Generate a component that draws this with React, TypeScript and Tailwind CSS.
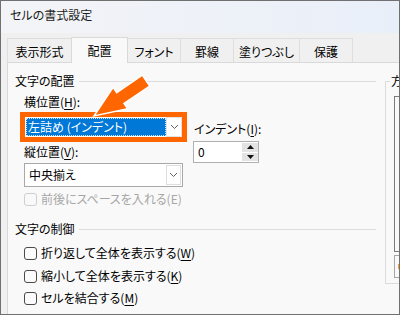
import React from "react";

const U = ({ c }: { c: string }) => <span className="underline underline-offset-[2px] decoration-1">{c}</span>;

const Chevron = () => (
  <svg width="9" height="6" viewBox="0 0 9 6" className="block">
    <path d="M1 1 L4.5 4.5 L8 1" fill="none" stroke="#606060" strokeWidth="1" />
  </svg>
);

const Check = ({ label, disabled }: { label: React.ReactNode; disabled?: boolean }) => (
  <div className={`flex items-center h-[16px] gap-[4px] ${disabled ? "text-[#a6a6a6]" : "text-black"}`}>
    <div className={`w-[13px] h-[13px] rounded-[3px] border ${disabled ? "border-[#cfcfcf] bg-[#f9f9f9]" : "border-[#4a4a4a] bg-[#fbfbfb]"}`} />
    <span className="leading-[16px] whitespace-nowrap">{label}</span>
  </div>
);

const Header = ({ text }: { text: string }) => (
  <div className="flex items-center h-[16px]">
    <span className="leading-[16px] whitespace-nowrap">{text}</span>
    <div className="flex-1 h-px bg-[#dcdcdc] ml-[4px]" />
  </div>
);

const tabs = [
  { t: "表示形式", w: "w-[65px]" },
  { t: "配置", w: "w-[57px]", sel: true },
  { t: "フォント", w: "w-[54px]" },
  { t: "罫線", w: "w-[54px]" },
  { t: "塗りつぶし", w: "w-[67px]" },
  { t: "保護", w: "w-[54px]" },
];

export default function App() {
  return (
    <div className="relative w-[400px] h-[315px] overflow-hidden border border-[#707070] bg-[#f0f0f0] flex flex-col text-[12px] text-black font-['Noto_Sans_CJK_JP','Noto_Sans',sans-serif] [font-feature-settings:'palt']">
      {/* title bar */}
      <div className="h-[32px] shrink-0 pl-[9px] pt-[6px] bg-linear-to-r from-[#f3f4f7] to-[#e9eff9] text-[#1b1b1b] leading-[16px]">
        セルの書式設定
      </div>
      {/* tab strip */}
      <div className="h-[29px] shrink-0 flex items-end pl-[6px] relative z-10">
        {tabs.map((tab, i) =>
          tab.sel ? (
            <div
              key={tab.t}
              className={`${tab.w} h-[26px] -mb-px ${i ? "-ml-px" : ""} relative z-10 flex items-center justify-center border-l border-r border-t border-[#d9d9d9] bg-[#f9f9f9] leading-[16px]`}
            >
              {tab.t}
            </div>
          ) : (
            <div
              key={tab.t}
              className={`${tab.w} h-[24px] ${i ? "-ml-px" : ""} flex items-center justify-center pt-[2px] border-l border-r border-t border-[#dedede] bg-[#f0f0f0] leading-[16px]`}
            >
              {tab.t}
            </div>
          )
        )}
      </div>
      {/* panel */}
      <div className="flex-1 ml-[6px] border-l border-t border-[#d9d9d9] bg-[#f9f9f9] flex">
        {/* left column */}
        <div className="w-[368px] shrink-0 pl-[7px] pt-[10px]">
          <Header text="文字の配置" />
          <div className="flex pl-[9px] mt-[5px]">
            <div className="w-[159px] shrink-0 flex flex-col">
              <div className="h-[16px] leading-[16px]">
                横位置(<U c="H" />):
              </div>
              {/* highlighted combo */}
              <div className="mt-[2px] -ml-[4px] w-[167px] h-[30px] border-[5px] border-[#ff6600] bg-white flex p-px">
                <div className="flex-1 bg-[#0078d7] border border-dotted border-[#cfe4f7] text-white flex items-center pl-[1px] leading-[16px] whitespace-nowrap">
                  左詰め (インデント)
                </div>
                <div className="w-[16px] -my-px -mr-px flex items-center justify-center border border-[#e3e3e3] bg-white">
                  <Chevron />
                </div>
              </div>
              <div className="mt-[2px] h-[16px] leading-[16px]">
                縦位置(<U c="V" />):
              </div>
              <div className="mt-[3px] h-[24px] border border-[#a8a8a8] bg-white flex p-px">
                <div className="flex-1 flex items-center pl-[3px] leading-[16px]">中央揃え</div>
                <div className="w-[15px] flex items-center justify-center border border-[#dedede]">
                  <Chevron />
                </div>
              </div>
              <div className="mt-[4px]">
                <Check disabled label="前後にスペースを入れる(E)" />
              </div>
            </div>
            <div className="ml-[10px] pt-[27px] flex flex-col">
              <div className="h-[16px] leading-[16px] ml-px whitespace-nowrap">
                インデント(<U c="I" />):
              </div>
              <div className="mt-[4px] w-[66px] h-[22px] border border-[#b0b0b0] bg-white flex">
                <div className="flex-1 flex items-center pl-[4px] leading-[16px]">0</div>
                <div className="w-[16px] flex flex-col gap-px py-px">
                  <div className="flex-1 bg-[#e3e3e3] flex items-center justify-center">
                    <svg width="7" height="4" viewBox="0 0 7 4" className="block">
                      <path d="M0 4 L3.5 0 L7 4 Z" fill="#111" />
                    </svg>
                  </div>
                  <div className="flex-1 bg-[#e3e3e3] flex items-center justify-center">
                    <svg width="7" height="4" viewBox="0 0 7 4" className="block">
                      <path d="M0 0 L7 0 L3.5 4 Z" fill="#111" />
                    </svg>
                  </div>
                </div>
              </div>
            </div>
          </div>
          <div className="mt-[14px]">
            <Header text="文字の制御" />
          </div>
          <div className="pl-[9px] flex flex-col">
            <div className="mt-[8px]">
              <Check label={<>折り返して全体を表示する(<U c="W" />)</>} />
            </div>
            <div className="mt-[7px]">
              <Check label={<>縮小して全体を表示する(<U c="K" />)</>} />
            </div>
            <div className="mt-[6px]">
              <Check label={<>セルを結合する(<U c="M" />)</>} />
            </div>
          </div>
        </div>
        {/* right group box */}
        <div className="relative ml-[9px] mt-[18px] w-[60px] h-[203px] shrink-0 border border-[#dcdcdc]">
          <div className="absolute left-[4px] -top-[9px] px-px bg-[#f9f9f9] leading-[16px] whitespace-nowrap">方向</div>
          <div className="ml-[8px] mt-[14px] h-[156px] border border-[#7a7a7a] bg-[#f9f9f9]" />
          <div className="ml-[8px] mt-[3px] h-[23px] border border-[#a6a6a6] bg-[#f9f9f9] flex items-center pl-[3px]">
            <div className="w-[2px] h-[5px] bg-[#f0a030]" />
          </div>
        </div>
      </div>
      {/* annotation arrow */}
      <svg className="absolute left-0 top-0 pointer-events-none" width="400" height="315" viewBox="-1 -1 400 315">
        <polygon
          points="92,114 111.1,85.3 114.7,90.6 140.3,73.2 147.7,84 122,101.4 125.7,106.7"
          fill="#ff6600"
          stroke="#ffffff"
          strokeWidth="1.5"
          strokeLinejoin="miter"
        />
      </svg>
    </div>
  );
}
